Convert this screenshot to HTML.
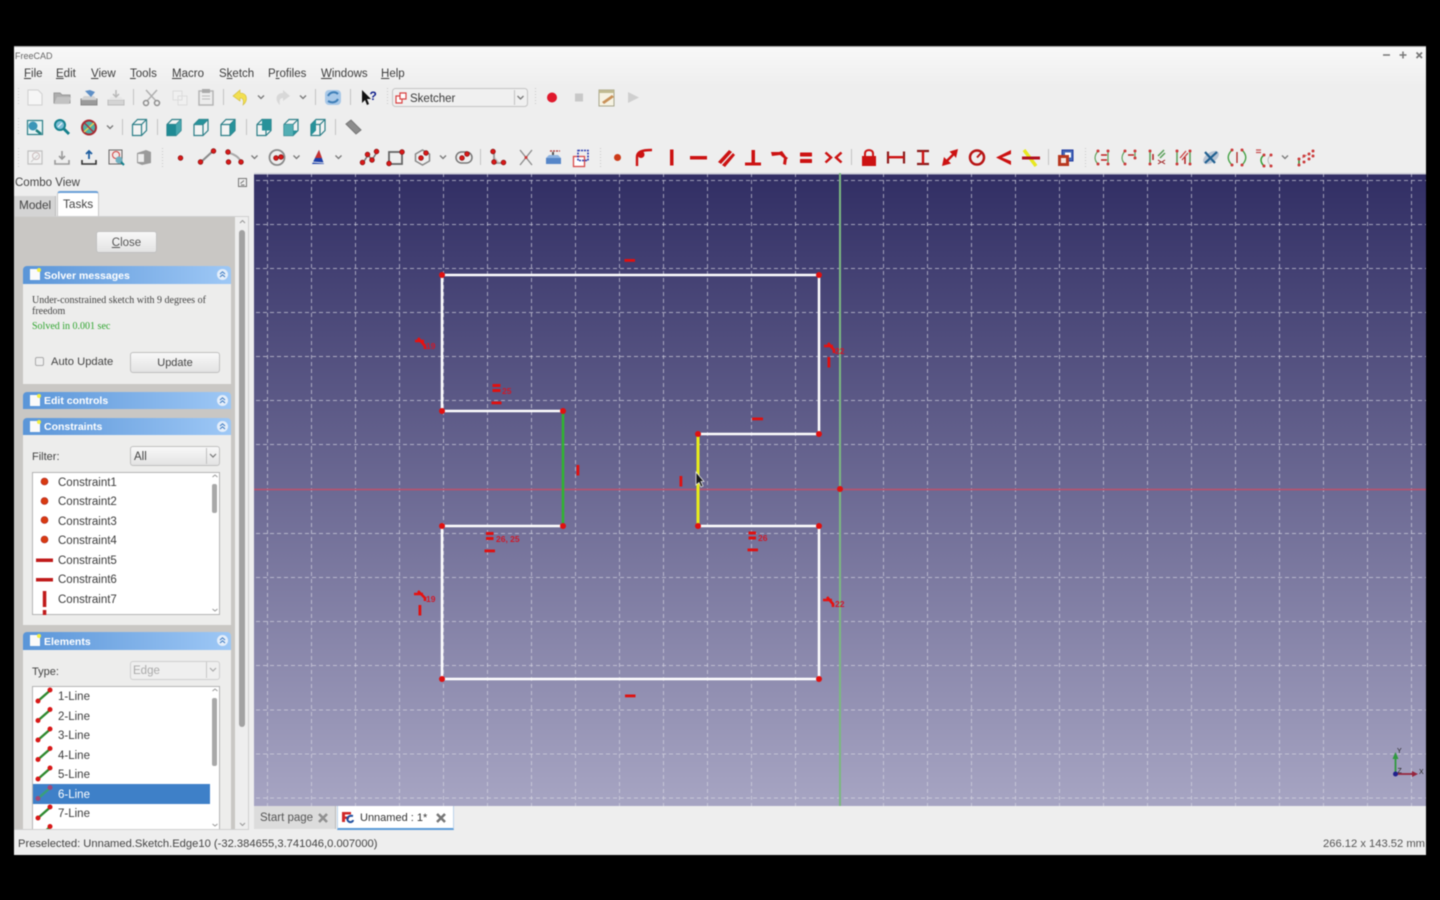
<!DOCTYPE html>
<html><head><meta charset="utf-8"><title>FreeCAD</title>
<style>
html,body{margin:0;padding:0;width:1440px;height:900px;overflow:hidden;background:#000}
#w{position:absolute;left:0;top:0;width:1440px;height:900px;font-family:"Liberation Sans",sans-serif;color:#3c3c3c;font-size:11.5px;filter:blur(.4px)}
.a,.t{position:absolute;white-space:nowrap}
.t{line-height:14px;margin-top:1px}
.hd{position:absolute;left:23px;width:208px;background:linear-gradient(90deg,#5a95d8,#9ec8f6);border-radius:4px 4px 0 0;color:#fff;font-weight:bold;font-size:10.5px}
.hd i{position:absolute;left:7px;top:3px;width:10px;height:11px;background:#fafafa;border-top-right-radius:3px}
.hd i:after{content:"";position:absolute;right:-1px;top:-1px;width:4px;height:4px;border-radius:50%;background:#f2ee40}
.hd b{position:absolute;left:21px;top:3px;line-height:14px}
.hd.s b{top:2px}
.hd svg{position:absolute;right:3px;top:3px}
.body{position:absolute;left:23px;width:208px;background:#ededec}
.btn{position:absolute;border:1px solid #c0c0c0;border-radius:3px;background:linear-gradient(#f8f8f8,#e3e3e3);text-align:center;box-sizing:border-box}
.list{position:absolute;background:#fff;border:1px solid #b4b4b4;box-sizing:border-box;overflow:hidden}
u{text-decoration:underline}
svg{position:absolute;overflow:visible}
</style></head><body><div id="w">

<!-- window -->
<div class="a" style="left:14px;top:46px;width:1412px;height:809px;background:#eeeeee;border-top:1px solid #a8a8a8;box-sizing:border-box"></div>
<div class="a" style="left:14px;top:47px;width:1412px;height:40px;background:linear-gradient(#f8f8f8,#eeeeee)"></div>
<div class="t" style="left:15px;top:48px;font-size:9px;color:#666">FreeCAD</div>
<div class="t" style="left:24px;top:66px"><u>F</u>ile</div>
<div class="t" style="left:56px;top:66px"><u>E</u>dit</div>
<div class="t" style="left:91px;top:66px"><u>V</u>iew</div>
<div class="t" style="left:130px;top:66px"><u>T</u>ools</div>
<div class="t" style="left:172px;top:66px"><u>M</u>acro</div>
<div class="t" style="left:219px;top:66px">S<u>k</u>etch</div>
<div class="t" style="left:268px;top:66px">P<u>r</u>ofiles</div>
<div class="t" style="left:321px;top:66px"><u>W</u>indows</div>
<div class="t" style="left:381px;top:66px"><u>H</u>elp</div>

<!-- all toolbars + window buttons -->
<svg style="left:0;top:0" width="1440" height="175" viewBox="0 0 1440 175">
<defs>
<g id="ch"><path d="M-3-1.500 0 1.500 3-1.500" fill="none" stroke="#777" stroke-width="1.300"/></g>
<g id="pt"><circle r="2.400" fill="#d81818" stroke="#7a0d0d" stroke-width=".6"/></g>
<g id="cube"><path d="M-7-3-2-8H7V3L2 8H-7Z" fill="#fff" fill-opacity=".3" stroke="#2c7f88" stroke-width="1.200"/><path d="M-7-3H2V8M2-3 7-8" fill="none" stroke="#2c7f88" stroke-width="1.200"/></g>
<g id="sm"><circle r="1.500" fill="#cc3a3a"/></g>
</defs>
<g stroke="#c8c8c8" stroke-width="1" stroke-dasharray="1 2" fill="none">
<path d="M18.500 88V106M18.500 118V136M18.500 148V167M387.500 88V106M535.500 88V106M162.500 148V167M600.500 148V167M1085.500 148V167"/></g>
<g stroke="#c4c4c4" stroke-width="1"><path d="M133.500 89V105M223.500 89V105M315.500 89V105M350.500 89V105M122.500 119V135M157.500 119V135M246.500 119V135M335.500 119V135M480.500 149V165M851.500 149V165M1048.500 149V165"/></g>

<!-- row 1 -->
<path d="M28 90H38L42 94V105H28Z" fill="#f6f6f6" stroke="#d0d0d0"/>
<path d="M54 93H60L62 95H70V103H54Z" fill="#aeaeae" stroke="#999"/><path d="M54 104 57 97H71L69 104Z" fill="#c2c2c2"/>
<path d="M81 99H97V105H81Z" fill="#9a9a9a" stroke="#888"/><path d="M84 96H94L97 100H81Z" fill="#d2d2d2"/><path d="M85 91 91 97 95 92 90 90Z" fill="#5e8fc6"/>
<path d="M108 100H124V105H108Z" fill="#d4d4d4" stroke="#bbb"/><path d="M111 97H121L124 100H108Z" fill="#e6e6e6"/><path d="M116 90V97M113 94 116 97 119 94" stroke="#b8b8b8" fill="none" stroke-width="1.500"/>
<g stroke="#b0b0b0" fill="none" stroke-width="1.500"><path d="M146 90 156 101M157 90 147 101"/><circle cx="146" cy="103" r="2.500" stroke="#8f8f8f"/><circle cx="157" cy="103" r="2.500" stroke="#8f8f8f"/></g>
<path d="M173 91H182V100H173ZM178 96H187V105H178Z" fill="#f0f0f0" stroke="#dcdcdc"/>
<path d="M199 91H213V105H199Z" fill="#ececec" stroke="#b5b5b5" stroke-width="1.500"/><path d="M202 89H210V93H202Z" fill="#aaa"/><path d="M202 96H210M202 99H210" stroke="#bbb"/>
<path d="M240 90 233 96 240 101V98C243 98 244 100 243 105 248 101 248 93 240 93Z" fill="#f2df50" stroke="#d0bc38" stroke-width=".6"/>
<use href="#ch" x="261" y="97"/>
<path d="M283 90 290 96 283 101V98C280 98 279 100 280 105 275 101 275 93 283 93Z" fill="#d8d8d8"/>
<use href="#ch" x="303" y="97"/>
<rect x="325" y="90" width="16" height="15" rx="4" fill="#a8c8e8"/><path d="M328 96C330 92 335 91 338 94M338 99C336 103 331 103 328 101" fill="none" stroke="#3f7fb8" stroke-width="2"/>
<path d="M362 90V103L365 100 367 105 369 104 367 99H371Z" fill="#111"/>
<text x="369.500" y="100" font-size="12" font-weight="bold" fill="#10208c" font-family="Liberation Sans">?</text>
<rect x="392.500" y="88.500" width="135" height="18" rx="3" fill="#f0f0f0" stroke="#c4c4c4"/>
<path d="M514.500 90V105" stroke="#c4c4c4"/><use href="#ch" x="520.500" y="97.500"/>
<path d="M396 96H402V103H396Z" fill="#fff" stroke="#d84040" stroke-width="1.200"/><path d="M400 93H406V99H400Z" fill="#fff" stroke="#d84040" stroke-width="1.200"/>
<circle cx="552" cy="97.500" r="5" fill="#e0182c"/>
<rect x="575" y="93.500" width="8" height="8" fill="#c8c8c8"/>
<path d="M599 90H614V106H599Z" fill="#f6f2e2" stroke="#a8a68c"/><path d="M599 90H614V93H599Z" fill="#c0ba90"/><path d="M602 102 612 95 614 97 604 104Z" fill="#c89058"/>
<path d="M628 92 639 97.500 628 103Z" fill="#cfcfcf"/>

<!-- row 2 -->
<rect x="27.500" y="120.500" width="15" height="14" fill="#e8f4f4" stroke="#2c7f88" stroke-width="1.200"/><circle cx="33" cy="126" r="4.500" fill="#3a96b8"/><path d="M36 130 41 134" stroke="#1f7f80" stroke-width="2.600"/>
<circle cx="60" cy="125" r="5" fill="#7fc0d8" stroke="#14808c" stroke-width="2"/><path d="M64 129 69 134" stroke="#14808c" stroke-width="2.800"/><path d="M58 127 62 123" stroke="#fff"/>
<circle cx="89" cy="127.500" r="7" fill="#4fb0a8" stroke="#a82a30" stroke-width="2"/><path d="M84 132 94 123" stroke="#e8d050" stroke-width="1.500"/><path d="M84 122.500 94 132.500" stroke="#a83040" stroke-width="1.300"/>
<use href="#ch" x="110" y="127"/>
<use href="#cube" x="139.500" y="127.500"/>
<use href="#cube" x="174" y="127.500"/><path d="M167 124.500H176V135.500H167Z" fill="#1f8a94"/><path d="M176 124.500 181 119.500V130.500L176 135.500Z" fill="#46a6ae"/>
<use href="#cube" x="201" y="127.500"/><path d="M194 124.500 199 119.500H208L203 124.500Z" fill="#28929a"/>
<use href="#cube" x="228" y="127.500"/><path d="M230 124.500 235 119.500V130.500L230 135.500Z" fill="#28929a"/>
<use href="#cube" x="264" y="127.500"/><path d="M262 119.500H271V130.500H262Z" fill="#28929a"/>
<use href="#cube" x="291" y="127.500"/><path d="M284 135.500 289 130.500H298L293 135.500Z" fill="#28929a"/><path d="M284 124.500H293V135.500H284Z" fill="#52aeb4"/>
<use href="#cube" x="318" y="127.500"/><path d="M311 124.500 316 119.500V130.500L311 135.500Z" fill="#28929a"/>
<path d="M346 124 351 120 361 130 356 134Z" fill="#8c8c8c" stroke="#777"/>

<!-- row 3 -->
<path d="M28 151H42V164H28Z" fill="#f2f2f2" stroke="#c0c0c0" stroke-width="1.200"/><circle cx="36" cy="156" r="3.500" fill="none" stroke="#cbbcbc"/><path d="M31 162 38 155" stroke="#ccc"/>
<path d="M62 151V159M59 156 62 159 65 156" fill="none" stroke="#9a9a9a" stroke-width="1.600"/><path d="M55 160V164H69V160" fill="none" stroke="#9a9a9a" stroke-width="1.600"/>
<path d="M89 159V151M86 154 89 151 92 154" fill="none" stroke="#1f5fa0" stroke-width="1.800"/><path d="M82 160V164H96V160" fill="none" stroke="#333" stroke-width="1.600"/>
<rect x="109" y="150" width="13" height="14" fill="#f0e8e8" stroke="#666"/><circle cx="116" cy="155" r="3.500" fill="none" stroke="#d04040"/><circle cx="119" cy="160" r="3.500" fill="#6fb0c0"/><path d="M121 162 124 165" stroke="#14808c" stroke-width="2"/>
<path d="M137 153 146 150 151 152V163L142 165 137 163Z" fill="#9a9a9a"/><rect x="138" y="154" width="6" height="8" fill="#eee"/>
<use href="#pt" x="180.500" y="158"/>
<path d="M201 162 213 151" stroke="#8a8a8a" stroke-width="2"/><use href="#pt" x="200.500" y="162"/><use href="#pt" x="213.500" y="151"/>
<path d="M229 153C234 154 239 157 241 162" stroke="#aaa" stroke-width="2" fill="none"/><use href="#pt" x="228" y="152"/><use href="#pt" x="228.500" y="162"/><use href="#pt" x="241" y="162"/><use href="#ch" x="254.500" y="157"/>
<circle cx="277" cy="157.500" r="7.500" fill="#eee" stroke="#8a8a8a" stroke-width="1.800"/><use href="#pt" x="276" y="158"/><use href="#pt" x="281" y="157"/><use href="#ch" x="296.500" y="157"/>
<path d="M319 150 324 164H312Z" fill="#1a3fa8"/><path d="M319 150 322 158 315 158Z" fill="#c83030"/><path d="M311 162 325 163" stroke="#eaeaea"/><use href="#ch" x="338.500" y="157"/>
<path d="M363 163 368 155 372 160 377 152" stroke="#777" stroke-width="1.500" fill="none"/><use href="#pt" x="362.500" y="162.500"/><use href="#pt" x="367.500" y="154.500"/><use href="#pt" x="372" y="160"/><use href="#pt" x="376.500" y="151.500"/>
<rect x="389" y="152" width="13" height="12" fill="none" stroke="#666" stroke-width="1.800"/><use href="#pt" x="389" y="163.500"/><use href="#pt" x="402" y="152"/>
<path d="M422.500 150 429.500 154V161L422.500 165 415.500 161V154Z" fill="#eee" stroke="#888" stroke-width="1.500"/><use href="#pt" x="421" y="158"/><use href="#pt" x="426" y="153"/><use href="#ch" x="443" y="157"/>
<rect x="456" y="152" width="16" height="11" rx="5.500" fill="#eee" stroke="#777" stroke-width="1.500"/><use href="#pt" x="462" y="158"/><use href="#pt" x="467" y="154"/>
<path d="M494 152V163H505" stroke="#999" stroke-width="1.800" fill="none"/><use href="#pt" x="493" y="151.500"/><use href="#pt" x="494" y="162"/><use href="#pt" x="503.500" y="162.500"/><path d="M495 158 499 163" stroke="#bbb"/>
<path d="M520 150 532 165M532 150 520 165" stroke="#8a8a8a" stroke-width="1.300"/><use href="#sm" x="526" y="157.500"/>
<path d="M546 158H561V164H546Z" fill="#5686c8"/><path d="M549 155H558L561 158H546Z" fill="#90b4e0"/><path d="M553 155V152" stroke="#555" stroke-width="2"/><path d="M550 151H560" stroke="#b03030" stroke-width="1.300" stroke-dasharray="2 1"/>
<rect x="573.500" y="156.500" width="11" height="10" fill="#fff" stroke="#d84848" stroke-width="1.300"/><rect x="578" y="150.500" width="10" height="10" fill="none" stroke="#2838b0" stroke-width="1.500" stroke-dasharray="2 1"/>

<g fill="#cc1212">
<circle cx="617.500" cy="157.500" r="3.500" fill="#cc3a18"/>
<path d="M637 166V157C637 152 641 150 652 150" fill="none" stroke="#cc1212" stroke-width="2.400"/><circle cx="641" cy="154.500" r="3.500"/>
<rect x="670" y="149.500" width="3.500" height="16"/>
<rect x="690" y="156" width="17" height="3.500"/>
<path d="M718 162 729 150 732 152 721 164ZM722 165 733 153 735 155 725 167Z"/>
<path d="M745 162.500H761V165.500H745ZM751.500 150H755V163H751.500Z"/>
<path d="M771 152 779 152 788 158 786 160 780 155 772 156ZM779 152 782 151 787 158 786 165 783 164 784 158Z"/>
<rect x="800" y="152.500" width="12" height="4" rx=".6"/><rect x="800" y="159" width="12" height="4" rx=".6"/>
<path d="M825.500 152.500 831 157.500 825.500 162.500M841.500 152.500 836 157.500 841.500 162.500" fill="none" stroke="#cc1212" stroke-width="2.500"/>
<path d="M862 156H876V166H862Z"/><path d="M865 156V153.500C865 149 873 149 873 153.500V156" fill="none" stroke="#cc1212" stroke-width="2"/>
<path d="M888 151.500V163.500" stroke="#8c1a1a" stroke-width="2.200" fill="none"/><path d="M904 151.500V163.500" stroke="#8c1a1a" stroke-width="2.200" fill="none"/><rect x="888" y="156" width="16" height="2.400" fill="#cc1212"/>
<path d="M917 151H929M917 164H929" stroke="#8c1a1a" stroke-width="2.200" fill="none"/><rect x="921.800" y="151" width="2.400" height="13"/>
<path d="M942 166 944 157 946.500 159.500 952 154 949.500 151.500 958 149 956 158 954 155.500 948.500 161 951 163.500Z"/>
<circle cx="977" cy="157.500" r="7" fill="none" stroke="#b81414" stroke-width="2.500"/><path d="M977 157.500 982 152" stroke="#b81414" stroke-width="2"/>
<path d="M1011 150 996 157.500 1011 165 1011 161 1002 157.500 1011 154Z"/>
<path d="M1024 150 1036 166" stroke="#e8e820" stroke-width="3.500"/><rect x="1022" y="156.500" width="18" height="3" fill="#b01020"/>
</g>
<rect x="1062" y="150" width="11" height="11" fill="#4468b8" stroke="#2038a0"/><rect x="1065" y="152.500" width="6" height="5" fill="#fff"/><rect x="1058" y="155" width="11" height="11" fill="#b83820"/><rect x="1061" y="158" width="5" height="5" fill="#f4e8e0"/>

<g>
<path d="M1098 151C1094 156 1094 160 1098 164M1108 151V164" stroke="#58a058" stroke-width="1.200" fill="none"/><path d="M1101 155H1107M1101 160H1107" stroke="#c02020" stroke-width="1.500"/><use href="#sm" x="1098" y="151"/><use href="#sm" x="1098" y="164"/><use href="#sm" x="1108" y="151"/><use href="#sm" x="1108" y="164"/>
<path d="M1125 151C1121 156 1121 160 1125 164M1135 151V158" stroke="#58a058" stroke-width="1.200" fill="none"/><path d="M1128 155H1134" stroke="#c02020" stroke-width="1.500"/><use href="#sm" x="1125" y="151"/><use href="#sm" x="1125" y="164"/><use href="#sm" x="1135" y="151"/><use href="#sm" x="1135" y="158"/>
<path d="M1150 151V164" stroke="#58a058" stroke-width="1.500"/><path d="M1153 154V160" stroke="#b02020" stroke-width="1.500"/><path d="M1158 156 1164 150M1160 158 1165 153" stroke="#58a058" stroke-width="1.500"/><path d="M1158 160 1161 162 1158 164M1165 160 1162 162 1165 164" stroke="#a02020" fill="none"/><use href="#sm" x="1150" y="151"/><use href="#sm" x="1150" y="164"/>
<path d="M1177 151V164" stroke="#58a058" stroke-width="1.500"/><path d="M1190 151V164" stroke="#58a058" stroke-width="1.500"/><path d="M1180 158 1186 151M1182 160 1188 153" stroke="#c84040" stroke-width="1.300"/><path d="M1185 157V164" stroke="#b02020" stroke-width="1.500"/><use href="#sm" x="1177" y="151"/><use href="#sm" x="1190" y="151"/><use href="#sm" x="1177" y="164"/><use href="#sm" x="1190" y="164"/>
<ellipse cx="1211" cy="157.500" rx="9" ry="5" transform="rotate(-35 1211 157.500)" fill="#b8c4d4"/><path d="M1205 163 1217 152M1205 152 1215 163" stroke="#1f5f90" stroke-width="2.200"/>
<path d="M1232 150C1227 155 1227 160 1232 165M1242 150C1247 155 1247 160 1242 165" stroke="#40a040" stroke-width="1.300" fill="none"/><path d="M1237 152V163" stroke="#b02020" stroke-width="1.300"/><use href="#sm" x="1232" y="150"/><use href="#sm" x="1242" y="150"/><use href="#sm" x="1232" y="165"/><use href="#sm" x="1242" y="165"/>
<path d="M1256 150H1261M1256 152.500H1261" stroke="#c85050" stroke-width="1.200"/><path d="M1264 155C1260 158 1260 162 1264 166" stroke="#30a030" stroke-width="1.500" fill="none"/><path d="M1271 155C1267 158 1267 162 1271 166" stroke="#bbb" fill="none"/><use href="#sm" x="1264" y="155"/><use href="#sm" x="1271" y="155"/><use href="#sm" x="1264" y="166"/><use href="#sm" x="1271" y="166"/>
<use href="#ch" x="1285" y="157"/>
<path d="M1299 160V165" stroke="#309030" stroke-width="1.500"/><path d="M1299 160 1313 151" stroke="#c86060" stroke-width="1" stroke-dasharray="1 3"/><use href="#sm" x="1299" y="159"/><use href="#sm" x="1299" y="165"/><use href="#sm" x="1304" y="156"/><use href="#sm" x="1304" y="162"/><use href="#sm" x="1309" y="154"/><use href="#sm" x="1309" y="159"/><use href="#sm" x="1313" y="151"/><use href="#sm" x="1313" y="156"/>
</g>

<path d="M1383 55H1390" stroke="#777" stroke-width="1.500"/>
<path d="M1399.500 55H1406.500M1403 51.500V58.500" stroke="#777" stroke-width="1.500"/>
<path d="M1416.500 52.500 1422 58M1422 52.500 1416.500 58" stroke="#777" stroke-width="1.700"/>
</svg>
<div class="t" style="left:410px;top:91px;font-size:11.500px">Sketcher</div>

<!-- viewport -->
<svg style="left:254px;top:173px;overflow:hidden" width="1172" height="633" viewBox="254 173 1172 633">
<defs><linearGradient id="bg" x1="0" y1="0" x2="0" y2="1"><stop offset="0" stop-color="#312e64"/><stop offset="1" stop-color="#a7a5c3"/></linearGradient></defs>
<rect x="254" y="173" width="1172" height="633" fill="url(#bg)"/>
<rect x="254" y="173" width="1172" height="1.500" fill="#c8c8d4"/>
<g stroke="#d8d8e4" stroke-opacity=".65" stroke-width="1" stroke-dasharray="4 3" fill="none">
<path d="M267.500 173V806M311.500 173V806M355.500 173V806M399.500 173V806M443.500 173V806M487.500 173V806M531.500 173V806M575.500 173V806M619.500 173V806M663.500 173V806M707.500 173V806M751.500 173V806M795.500 173V806M883.500 173V806M927.500 173V806M971.500 173V806M1015.500 173V806M1059.500 173V806M1103.500 173V806M1147.500 173V806M1191.500 173V806M1235.500 173V806M1279.500 173V806M1323.500 173V806M1367.500 173V806M1411.500 173V806"/>
<path d="M256 180.500H1426M256 224.500H1426M256 268.500H1426M256 312.500H1426M256 356.500H1426M256 400.500H1426M256 444.500H1426M256 533.500H1426M256 577.500H1426M256 621.500H1426M256 665.500H1426M256 710H1426M256 754H1426M256 798H1426"/>
</g>
<path d="M254 489.500H1426" stroke="#b45470" stroke-width="1.800"/>
<path d="M840 173V806" stroke="#7cb880" stroke-width="2"/>
<g fill="none" stroke="#fff" stroke-width="2.500">
<path d="M442 275H819M442 275V411H563M563 526H442V679H819V526H698M698 434H819V275"/>
</g>
<path d="M563 411V526" stroke="#2fb52f" stroke-width="2.500"/>
<path d="M698 434V526" stroke="#e8ec1c" stroke-width="3"/>
<g fill="#e01010">
<circle cx="442" cy="275" r="3"/><circle cx="819" cy="275" r="3"/><circle cx="442" cy="411" r="3"/><circle cx="563" cy="411" r="3"/><circle cx="563" cy="526" r="3"/><circle cx="442" cy="526" r="3"/><circle cx="442" cy="679" r="3"/><circle cx="819" cy="679" r="3"/><circle cx="819" cy="526" r="3"/><circle cx="698" cy="526" r="3"/><circle cx="698" cy="434" r="3"/><circle cx="819" cy="434" r="3"/><circle cx="840" cy="489" r="3"/>
<!-- horizontal dashes -->
<rect x="624.500" y="259" width="10.500" height="2.800"/><rect x="625" y="694.500" width="10.500" height="2.800"/><rect x="752" y="417.500" width="11" height="2.800"/>
<rect x="491.500" y="401.500" width="10" height="2.800"/><rect x="484.500" y="549.500" width="10.500" height="2.800"/><rect x="747.500" y="548.500" width="10.500" height="2.800"/>
<!-- vertical dashes -->
<rect x="576.500" y="465" width="2.800" height="10.500"/><rect x="679.500" y="476" width="2.800" height="10.500"/><rect x="827.500" y="357" width="2.800" height="10.500"/><rect x="418.500" y="605" width="2.800" height="10.500"/>
<!-- equals -->
<rect x="492.500" y="384" width="8" height="3"/><rect x="492.500" y="389" width="8" height="3"/>
<rect x="486" y="532" width="7.500" height="3"/><rect x="486" y="537" width="7.500" height="3"/>
<rect x="748.500" y="531.500" width="7.500" height="3"/><rect x="748.500" y="536.500" width="7.500" height="3"/>
</g>
<g fill="none" stroke="#e8100f" stroke-width="2.600">
<path d="M415 341H424M418 338 425 346V349"/><path d="M414 594H423M418 591 425 598V601"/>
<path d="M824 346H833M828 343 834 350V353"/><path d="M823 600H832M827 597 833 604V607"/>
</g>
<g font-family="Liberation Sans" font-size="8.500" font-weight="bold" fill="#d01828">
<text x="426" y="349">19</text><text x="426" y="602">19</text>
<text x="835" y="354">22</text><text x="835" y="607">22</text>
<text x="502" y="394">25</text><text x="496" y="542">26, 25</text><text x="758" y="541">26</text>
</g>
<!-- cursor -->
<path d="M696 472V485L699 482.500 701 487 703 486 701 481.500H704Z" fill="#1a1a1a" stroke="#e8e8e8" stroke-width=".8"/>
<!-- axis widget -->
<path d="M1395.500 774V757" stroke="#2f9a3f" stroke-width="1.800"/><path d="M1392.500 759 1395.500 752 1398.500 759Z" fill="#2f9a3f"/>
<path d="M1395.500 774H1413" stroke="#96243c" stroke-width="1.800"/><path d="M1412 771 1418 774 1412 777Z" fill="#96243c"/>
<circle cx="1395.500" cy="774" r="2.500" fill="#20208c"/>
<g font-family="Liberation Sans" font-size="7" fill="#222"><text x="1397" y="753">Y</text><text x="1397.500" y="773">Z</text><text x="1419" y="774">X</text></g>
</svg>

<!-- bottom tabs -->
<div class="a" style="left:254px;top:806px;width:82px;height:23px;background:#dcdcdc;border-right:1px solid #bbb;box-sizing:border-box"></div>
<div class="t" style="left:260px;top:810px;color:#555">Start page</div>
<svg style="left:317px;top:812px" width="12" height="12"><path d="M2 2 10 10M10 2 2 10" stroke="#909090" stroke-width="2.500"/></svg>
<div class="a" style="left:337px;top:806px;width:117px;height:24px;background:#fff;border:1px solid #bcd4ec;border-bottom:2px solid #5a9ad8;border-top:none;box-sizing:border-box"></div>
<svg style="left:341px;top:811px" width="13" height="13"><path d="M1 1H10V3.500H4V5.500H8V8H4V11H1Z" fill="#d02828"/><path d="M12 5C8 4 5 7 7 10 9 12 12 11 12 9" fill="none" stroke="#2050a0" stroke-width="2"/></svg>
<div class="t" style="left:360px;top:810px;color:#333;font-size:11px">Unnamed : 1*</div>
<svg style="left:435px;top:812px" width="12" height="12"><path d="M2 2 10 10M10 2 2 10" stroke="#777" stroke-width="2.500"/></svg>

<!-- status -->
<div class="t" style="left:18px;top:836px;color:#444;font-size:11.200px">Preselected: Unnamed.Sketch.Edge10 (-32.384655,3.741046,0.007000)</div>
<div class="t" style="left:1323px;top:836px;color:#555;font-size:11.200px">266.12 x 143.52 mm</div>

<!-- combo view -->
<div class="t" style="left:15px;top:175px;color:#444">Combo View</div>
<svg style="left:238px;top:178px" width="9" height="9"><rect x=".5" y=".5" width="8" height="8" fill="none" stroke="#777"/><path d="M2.500 5.500 6 2.500M3 7H6.500" stroke="#777"/></svg>
<div class="a" style="left:14px;top:196px;width:42px;height:20px;background:#d4d4d4;border-right:1px solid #bbb;box-sizing:border-box"></div>
<div class="t" style="left:19px;top:197px;color:#444;font-size:11.800px">Model</div>
<div class="a" style="left:57px;top:191px;width:42px;height:26px;background:#fff;border:1px solid #c8c8c8;border-top:2px solid #6aa0d8;border-bottom:none;border-radius:3px 3px 0 0;box-sizing:border-box"></div>
<div class="t" style="left:63px;top:196px;color:#444;font-size:11.800px">Tasks</div>
<div class="a" style="left:14px;top:216px;width:235px;height:614px;background:#eeeeee;border:1px solid #d0d0d0;box-sizing:border-box"></div>
<div class="a" style="left:15px;top:217px;width:220px;height:612px;background:#c9c7c4"></div>
<div class="a" style="left:239px;top:230px;width:6px;height:497px;background:#a2a2a2;border-radius:3px"></div>
<svg style="left:238px;top:218px" width="9" height="612"><path d="M2 5 4.500 2.500 7 5M2 605 4.500 607.500 7 605" stroke="#999" fill="none"/></svg>

<div class="btn" style="left:96px;top:231px;width:61px;height:22px;line-height:22px;color:#555;font-size:11.500px"><u>C</u>lose</div>

<!-- Solver -->
<div class="body" style="top:284px;height:100px"></div>
<div class="hd" style="top:266px;height:18px"><i></i><b>Solver messages</b><svg width="11" height="11"><circle cx="5.500" cy="5.500" r="5.500" fill="#e4eefa"/><path d="M3 5 5.500 2.800 8 5M3 8 5.500 5.800 8 8" fill="none" stroke="#3a78c0" stroke-width="1"/></svg></div>
<div class="t" style="left:32px;top:294px;font-family:'Liberation Serif',serif;font-size:10px;line-height:11px;color:#444">Under-constrained sketch with 9 degrees of<br>freedom</div>
<div class="t" style="left:32px;top:319px;font-family:'Liberation Serif',serif;font-size:10px;color:#2fa52f">Solved in 0.001 sec</div>
<div class="a" style="left:35px;top:357px;width:7px;height:7px;border:1px solid #aaa;border-radius:2px;background:#eee"></div>
<div class="t" style="left:51px;top:354px;color:#444;font-size:11.200px">Auto Update</div>
<div class="btn" style="left:130px;top:352px;width:90px;height:21px;line-height:21px;color:#444;font-size:11px">Update</div>

<!-- Edit controls -->
<div class="hd s" style="top:392px;height:17px"><i></i><b>Edit controls</b><svg width="11" height="11"><circle cx="5.500" cy="5.500" r="5.500" fill="#e4eefa"/><path d="M3 5 5.500 2.800 8 5M3 8 5.500 5.800 8 8" fill="none" stroke="#3a78c0" stroke-width="1"/></svg></div>

<!-- Constraints -->
<div class="body" style="top:435px;height:190px"></div>
<div class="hd s" style="top:418px;height:17px"><i></i><b>Constraints</b><svg width="11" height="11"><circle cx="5.500" cy="5.500" r="5.500" fill="#e4eefa"/><path d="M3 5 5.500 2.800 8 5M3 8 5.500 5.800 8 8" fill="none" stroke="#3a78c0" stroke-width="1"/></svg></div>
<div class="t" style="left:32px;top:449px;color:#444;font-size:11px">Filter:</div>
<div class="btn" style="left:130px;top:446px;width:90px;height:20px;text-align:left;padding-left:3px;line-height:20px;color:#444">All</div>
<svg style="left:205px;top:447px" width="15" height="18"><path d="M1.500 1V17" stroke="#c0c0c0"/><path d="M5 7 8 10 11 7" stroke="#777" fill="none" stroke-width="1.200"/></svg>
<div class="list" style="left:32px;top:472px;width:188px;height:143px"></div>
<div class="a" style="left:212px;top:484px;width:5px;height:29px;background:#a8a8a8;border-radius:2px"></div>
<svg style="left:211px;top:473px" width="8" height="141"><path d="M1.500 4 4 2 6.500 4M1.500 136 4 138 6.500 136" stroke="#999" fill="none"/></svg>
<svg style="left:33px;top:473px;overflow:hidden" width="20" height="142"><g fill="#d83a10" stroke="#a82020" stroke-width=".6"><circle cx="11.500" cy="8.500" r="3.500"/><circle cx="11.500" cy="28" r="3.500"/><circle cx="11.500" cy="47" r="3.500"/><circle cx="11.500" cy="66.500" r="3.500"/></g><g fill="#c01a1a"><rect x="3" y="85.500" width="17" height="3.500"/><rect x="3" y="105" width="17" height="3.500"/><rect x="9.800" y="118" width="3.500" height="16"/><rect x="9.800" y="137" width="3.500" height="5"/></g></svg>
<div class="t" style="left:58px;top:475px">Constraint1</div>
<div class="t" style="left:58px;top:494px">Constraint2</div>
<div class="t" style="left:58px;top:514px">Constraint3</div>
<div class="t" style="left:58px;top:533px">Constraint4</div>
<div class="t" style="left:58px;top:553px">Constraint5</div>
<div class="t" style="left:58px;top:572px">Constraint6</div>
<div class="t" style="left:58px;top:592px">Constraint7</div>

<!-- Elements -->
<div class="body" style="top:650px;height:179px"></div>
<div class="hd" style="top:632px;height:18px"><i></i><b>Elements</b><svg width="11" height="11"><circle cx="5.500" cy="5.500" r="5.500" fill="#e4eefa"/><path d="M3 5 5.500 2.800 8 5M3 8 5.500 5.800 8 8" fill="none" stroke="#3a78c0" stroke-width="1"/></svg></div>
<div class="t" style="left:32px;top:664px;color:#444;font-size:11px">Type:</div>
<div class="btn" style="left:130px;top:661px;width:90px;height:19px;text-align:left;padding-left:2px;line-height:19px;color:#aaa;background:#efefef;border-color:#cfcfcf">Edge</div>
<svg style="left:205px;top:661px" width="15" height="18"><path d="M1.500 1V17" stroke="#c8c8c8"/><path d="M5 7 8 10 11 7" stroke="#aaa" fill="none" stroke-width="1.200"/></svg>
<div class="list" style="left:32px;top:686px;width:188px;height:143px;border-bottom:none"></div>
<div class="a" style="left:33px;top:784px;width:177px;height:19.500px;background:#3e80c8"></div>
<div class="a" style="left:212px;top:698px;width:5px;height:68px;background:#a8a8a8;border-radius:2px"></div>
<svg style="left:211px;top:687px" width="8" height="142"><path d="M1.500 4 4 2 6.500 4M1.500 137 4 139 6.500 137" stroke="#999" fill="none"/></svg>
<svg style="left:33px;top:687px;overflow:hidden" width="20" height="142">
<defs><g id="ln"><path d="M5 14 17 3.500" stroke="#2f8a2f" stroke-width="2.400"/><circle cx="5" cy="14" r="2.500" fill="#d81818"/><circle cx="17" cy="3" r="2.500" fill="#d81818"/></g></defs>
<use href="#ln" x="0" y="0"/><use href="#ln" x="0" y="19.500"/><use href="#ln" x="0" y="39"/><use href="#ln" x="0" y="58.500"/><use href="#ln" x="0" y="78"/>
<g transform="translate(0 97.500)"><path d="M5 14 17 3.500" stroke="#3aa078" stroke-width="2.400"/><circle cx="5" cy="14" r="2.500" fill="#a04878"/><circle cx="17" cy="3" r="2.500" fill="#a04878"/></g>
<use href="#ln" x="0" y="117"/><use href="#ln" x="0" y="136.500"/>
</svg>
<div class="t" style="left:58px;top:689px">1-Line</div>
<div class="t" style="left:58px;top:709px">2-Line</div>
<div class="t" style="left:58px;top:728px">3-Line</div>
<div class="t" style="left:58px;top:748px">4-Line</div>
<div class="t" style="left:58px;top:767px">5-Line</div>
<div class="t" style="left:58px;top:787px;color:#fff">6-Line</div>
<div class="t" style="left:58px;top:806px">7-Line</div>
<div class="a" style="left:14px;top:829px;width:235px;height:1px;background:#d0d0d0"></div>
</div></body></html>
